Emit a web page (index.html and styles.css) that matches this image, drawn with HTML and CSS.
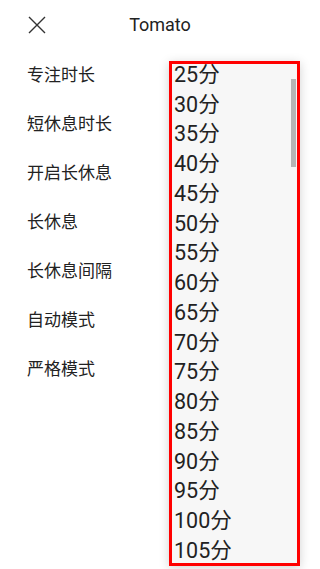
FILE: index.html
```html
<!DOCTYPE html>
<html lang="zh-CN">
<head>
    <meta charset="UTF-8">
    <title>Tomato</title>
    <link rel="stylesheet" href="styles.css">
</head>
<body>
    <div class="app-bar">
        <svg class="close-icon" width="18" height="18" viewBox="0 0 18 18">
            <path d="M1 1 L17 17 M17 1 L1 17" stroke="#333" stroke-width="1.4" fill="none"/>
        </svg>
        <div class="app-title">Tomato</div>
    </div>
    <div class="settings">
        <div class="setting-row">专注时长</div>
        <div class="setting-row">短休息时长</div>
        <div class="setting-row">开启长休息</div>
        <div class="setting-row">长休息</div>
        <div class="setting-row">长休息间隔</div>
        <div class="setting-row">自动模式</div>
        <div class="setting-row">严格模式</div>
    </div>
    <div class="picker">
        <div class="picker-list">
            <div class="picker-item">25分</div>
            <div class="picker-item">30分</div>
            <div class="picker-item">35分</div>
            <div class="picker-item">40分</div>
            <div class="picker-item">45分</div>
            <div class="picker-item">50分</div>
            <div class="picker-item">55分</div>
            <div class="picker-item">60分</div>
            <div class="picker-item">65分</div>
            <div class="picker-item">70分</div>
            <div class="picker-item">75分</div>
            <div class="picker-item">80分</div>
            <div class="picker-item">85分</div>
            <div class="picker-item">90分</div>
            <div class="picker-item">95分</div>
            <div class="picker-item">100分</div>
            <div class="picker-item">105分</div>
        </div>
        <div class="picker-scrollbar"></div>
    </div>
</body>
</html>
```

FILE: styles.css
```css
html, body {
    margin: 0;
    padding: 0;
    height: 100%;
}
* {
    box-sizing: border-box;
}
body {
    background: #fff;
    color: #222;
    font-family: Roboto, "Noto Sans CJK SC", sans-serif;
    position: relative;
    overflow: hidden;
}
.app-bar {
    height: 49px;
    display: flex;
    align-items: center;
    position: relative;
    padding-left: 28px;
}
.close-icon {
    display: block;
}
.app-title {
    position: absolute;
    left: 0;
    right: 0;
    text-align: center;
    font-size: 18px;
    pointer-events: none;
}
.settings {
    padding-left: 27px;
}
.setting-row {
    height: 49px;
    display: flex;
    align-items: center;
    font-size: 17px;
}
.picker {
    position: absolute;
    left: 169px;
    top: 61px;
    width: 131px;
    height: 505px;
    border: 3px solid #ff0000;
    background: #f7f7f7;
    box-shadow: 0 2px 10px rgba(0, 0, 0, 0.18);
    overflow: hidden;
}
.picker-list {
    padding-left: 2px;
    margin-top: -4px;
}
.picker-item {
    font-size: 21.5px;
    line-height: 29.73px;
    white-space: nowrap;
}
.picker-scrollbar {
    position: absolute;
    right: 1px;
    top: 15px;
    width: 5px;
    height: 88px;
    background: #b5b5b5;
}
```
